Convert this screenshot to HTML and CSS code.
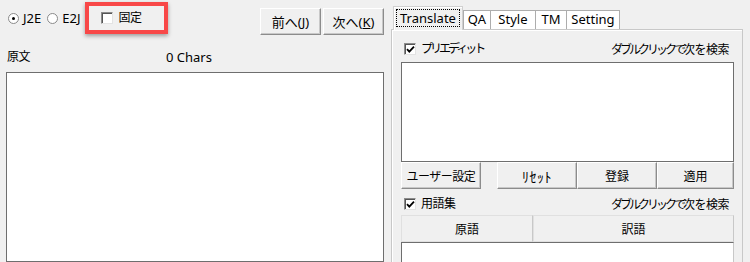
FILE: index.html
```html
<!DOCTYPE html>
<html lang="ja">
<head>
    <meta charset="UTF-8">
    <title>Translate</title>
    <link rel="stylesheet" href="styles.css">
</head>
<body>
    <div class="app">
        <!-- Colonne gauche : texte source -->
        <div class="left">
            <div class="topbar">
                <label class="radio first"><span class="radio-box on"></span><span class="latin">J2E</span></label>
                <label class="radio"><span class="radio-box"></span><span class="latin">E2J</span></label>
                <div class="highlight">
                    <label class="check"><span class="check-box"></span><span class="kanji">固定</span></label>
                </div>
                <div class="nav">
                    <button class="btn nav-btn">前へ(<u>J</u>)</button>
                    <button class="btn nav-btn">次へ(<u>K</u>)</button>
                </div>
            </div>
            <div class="source-head">
                <span class="source-label kanji">原文</span>
                <span class="latin">0 Chars</span>
            </div>
            <div class="textbox source-box"></div>
        </div>

        <!-- Colonne droite : onglets -->
        <div class="right">
            <div class="tabs">
                <div class="tab active"><span class="focus">Translate</span></div>
                <div class="tab tab-qa">QA</div>
                <div class="tab tab-style">Style</div>
                <div class="tab tab-tm">TM</div>
                <div class="tab tab-setting">Setting</div>
            </div>
            <div class="panel">
                <div class="row">
                    <label class="check"><span class="check-box checked"><svg width="9" height="9" viewBox="0 0 9 9"><path d="M1 4.2 L3.3 6.6 L8 1.6" fill="none" stroke="#000" stroke-width="1.8"/></svg></span><span class="kana">プリエディット</span></label>
                    <span class="hint"><span class="kana">ダブルクリックで</span><span class="kanji">次を検索</span></span>
                </div>
                <div class="textbox pre-box"></div>
                <div class="btn-row">
                    <button class="btn user-btn"><span class="kanji">ユーザー設定</span></button>
                    <button class="btn small-btn"><span class="half">ﾘｾｯﾄ</span></button>
                    <button class="btn small-btn">登録</button>
                    <button class="btn small-btn last">適用</button>
                </div>
                <div class="row glossary-row">
                    <label class="check"><span class="check-box checked"><svg width="9" height="9" viewBox="0 0 9 9"><path d="M1 4.2 L3.3 6.6 L8 1.6" fill="none" stroke="#000" stroke-width="1.8"/></svg></span><span class="kanji">用語集</span></label>
                    <span class="hint"><span class="kana">ダブルクリックで</span><span class="kanji">次を検索</span></span>
                </div>
                <div class="list-head">
                    <div class="col col-src">原語</div>
                    <div class="col col-dst">訳語</div>
                </div>
                <div class="list"></div>
            </div>
        </div>
    </div>
</body>
</html>
```

FILE: styles.css
```css
body {
    margin: 0;
    background: #f0f0f0;
    font-family: "Noto Sans", "Noto Sans CJK JP", sans-serif;
    font-size: 12px;
    color: #000;
    overflow: hidden;
}

.latin {
    font-size: 13px;
}

.kanji {
    letter-spacing: -0.5px;
}

.kana {
    letter-spacing: -3px;
}

.half {
    font-size: 14px;
    letter-spacing: 0.5px;
}

.app {
    display: flex;
    height: 262px;
}

/* Colonne gauche */
.left {
    width: 378px;
    padding-left: 6px;
    display: flex;
    flex-direction: column;
}

.topbar {
    display: flex;
    align-items: flex-start;
    height: 48px;
}

.radio {
    display: flex;
    align-items: center;
    gap: 4px;
    margin-top: 10px;
    margin-left: 6px;
    line-height: 16px;
}

.radio.first {
    margin-left: 2px;
}

.radio-box {
    width: 11px;
    height: 11px;
    border-radius: 50%;
    background: #fff;
    border: 1px solid #8a8a8a;
    box-sizing: border-box;
    position: relative;
}

.radio-box.on::after {
    content: "";
    position: absolute;
    left: 3px;
    top: 3px;
    width: 3px;
    height: 3px;
    border-radius: 50%;
    background: #000;
}

.highlight {
    margin-left: 5px;
    margin-top: 2px;
    width: 83px;
    height: 32px;
    box-sizing: border-box;
    border: 4px solid #f84848;
    box-shadow: 0 2px 4px rgba(0,0,0,0.35);
    display: flex;
    align-items: center;
    padding-left: 12px;
}

.check {
    display: flex;
    align-items: center;
    gap: 5px;
    line-height: 16px;
}

.check-box {
    width: 12px;
    height: 12px;
    box-sizing: border-box;
    background: #fff;
    border-top: 1px solid #8c8c8c;
    border-left: 1px solid #8c8c8c;
    border-right: 1px solid #e3e3e3;
    border-bottom: 1px solid #e3e3e3;
    box-shadow: inset 1px 1px #555;
    display: flex;
    align-items: center;
    justify-content: center;
}

.nav {
    margin-left: auto;
    margin-top: 8px;
    display: flex;
    gap: 2px;
}

.btn {
    font-family: "Noto Sans", "Noto Sans CJK JP", sans-serif;
    font-size: 12px;
    color: #000;
    background: #f0f0f0;
    border: 1px solid;
    border-color: #fff #8c8c8c #8c8c8c #fff;
    box-shadow: inset -1px -1px #c8c8c8;
    padding: 0;
    margin: 0;
    box-sizing: border-box;
}

.nav-btn {
    width: 61px;
    height: 27px;
    font-size: 13px;
}

.source-head {
    display: flex;
    height: 18px;
    line-height: 18px;
    padding-left: 1px;
}

.source-label {
    width: 159px;
}

.textbox {
    background: #fff;
    border: 1px solid #6e6e6e;
    box-sizing: border-box;
}

.source-box {
    margin-top: 6px;
    flex: 1;
}

/* Colonne droite */
.right {
    margin-left: 7px;
    width: 352px;
    display: flex;
    flex-direction: column;
}

.tabs {
    display: flex;
    align-items: flex-end;
    height: 30px;
    padding-left: 2px;
    position: relative;
    z-index: 1;
}

.tab {
    height: 18px;
    line-height: 17px;
    margin-bottom: 1px;
    background: #fff;
    border: 1px solid #adadad;
    border-bottom: none;
    margin-right: -1px;
    font-size: 13px;
    text-align: center;
    box-sizing: content-box;
}

.tab-qa { width: 26px; }
.tab-style { width: 44px; }
.tab-tm { width: 30px; }
.tab-setting { width: 52px; }

.tab.active {
    height: 23px;
    margin-bottom: 0;
    padding: 0 2px;
    background: #f0f0f0;
    border-color: #d0d0d0;
    box-shadow: inset 1px 1px #fff;
    margin-right: 0;
}

.focus {
    display: inline-block;
    margin-top: 2px;
    line-height: 16px;
    padding: 0 3px;
    border: 1px dotted #000;
}

.panel {
    flex: 1;
    margin-top: -1px;
    border: 1px solid #c8c8c8;
    border-bottom: none;
    box-shadow: inset 1px 1px #fff;
    padding: 10px 8px 0 9px;
    display: flex;
    flex-direction: column;
}

.row {
    display: flex;
    justify-content: space-between;
    align-items: center;
    height: 18px;
    padding-left: 3px;
    padding-right: 5px;
}

.pre-box {
    margin-top: 4px;
    height: 100px;
}

.btn-row {
    display: flex;
    height: 27px;
}

.btn-row .btn {
    height: 27px;
}

.user-btn {
    width: 80px;
    margin-right: 16px;
}

.small-btn {
    width: 80px;
}

.small-btn.last {
    width: 77px;
}

.glossary-row {
    margin-top: 6px;
}

.list-head {
    display: flex;
    margin-top: 2px;
    height: 27px;
}

.col {
    display: flex;
    align-items: center;
    justify-content: center;
    border: 1px solid #e0e0e0;
    border-right-color: #c8c8c8;
    box-sizing: border-box;
    background: #f0f0f0;
}

.col-src {
    width: 132px;
}

.col-dst {
    flex: 1;
}

.list {
    flex: 1;
    background: #fff;
    border-top: 1px solid #6e6e6e;
    border-left: 1px solid #6e6e6e;
    border-right: 1px solid #c8c8c8;
}
```
